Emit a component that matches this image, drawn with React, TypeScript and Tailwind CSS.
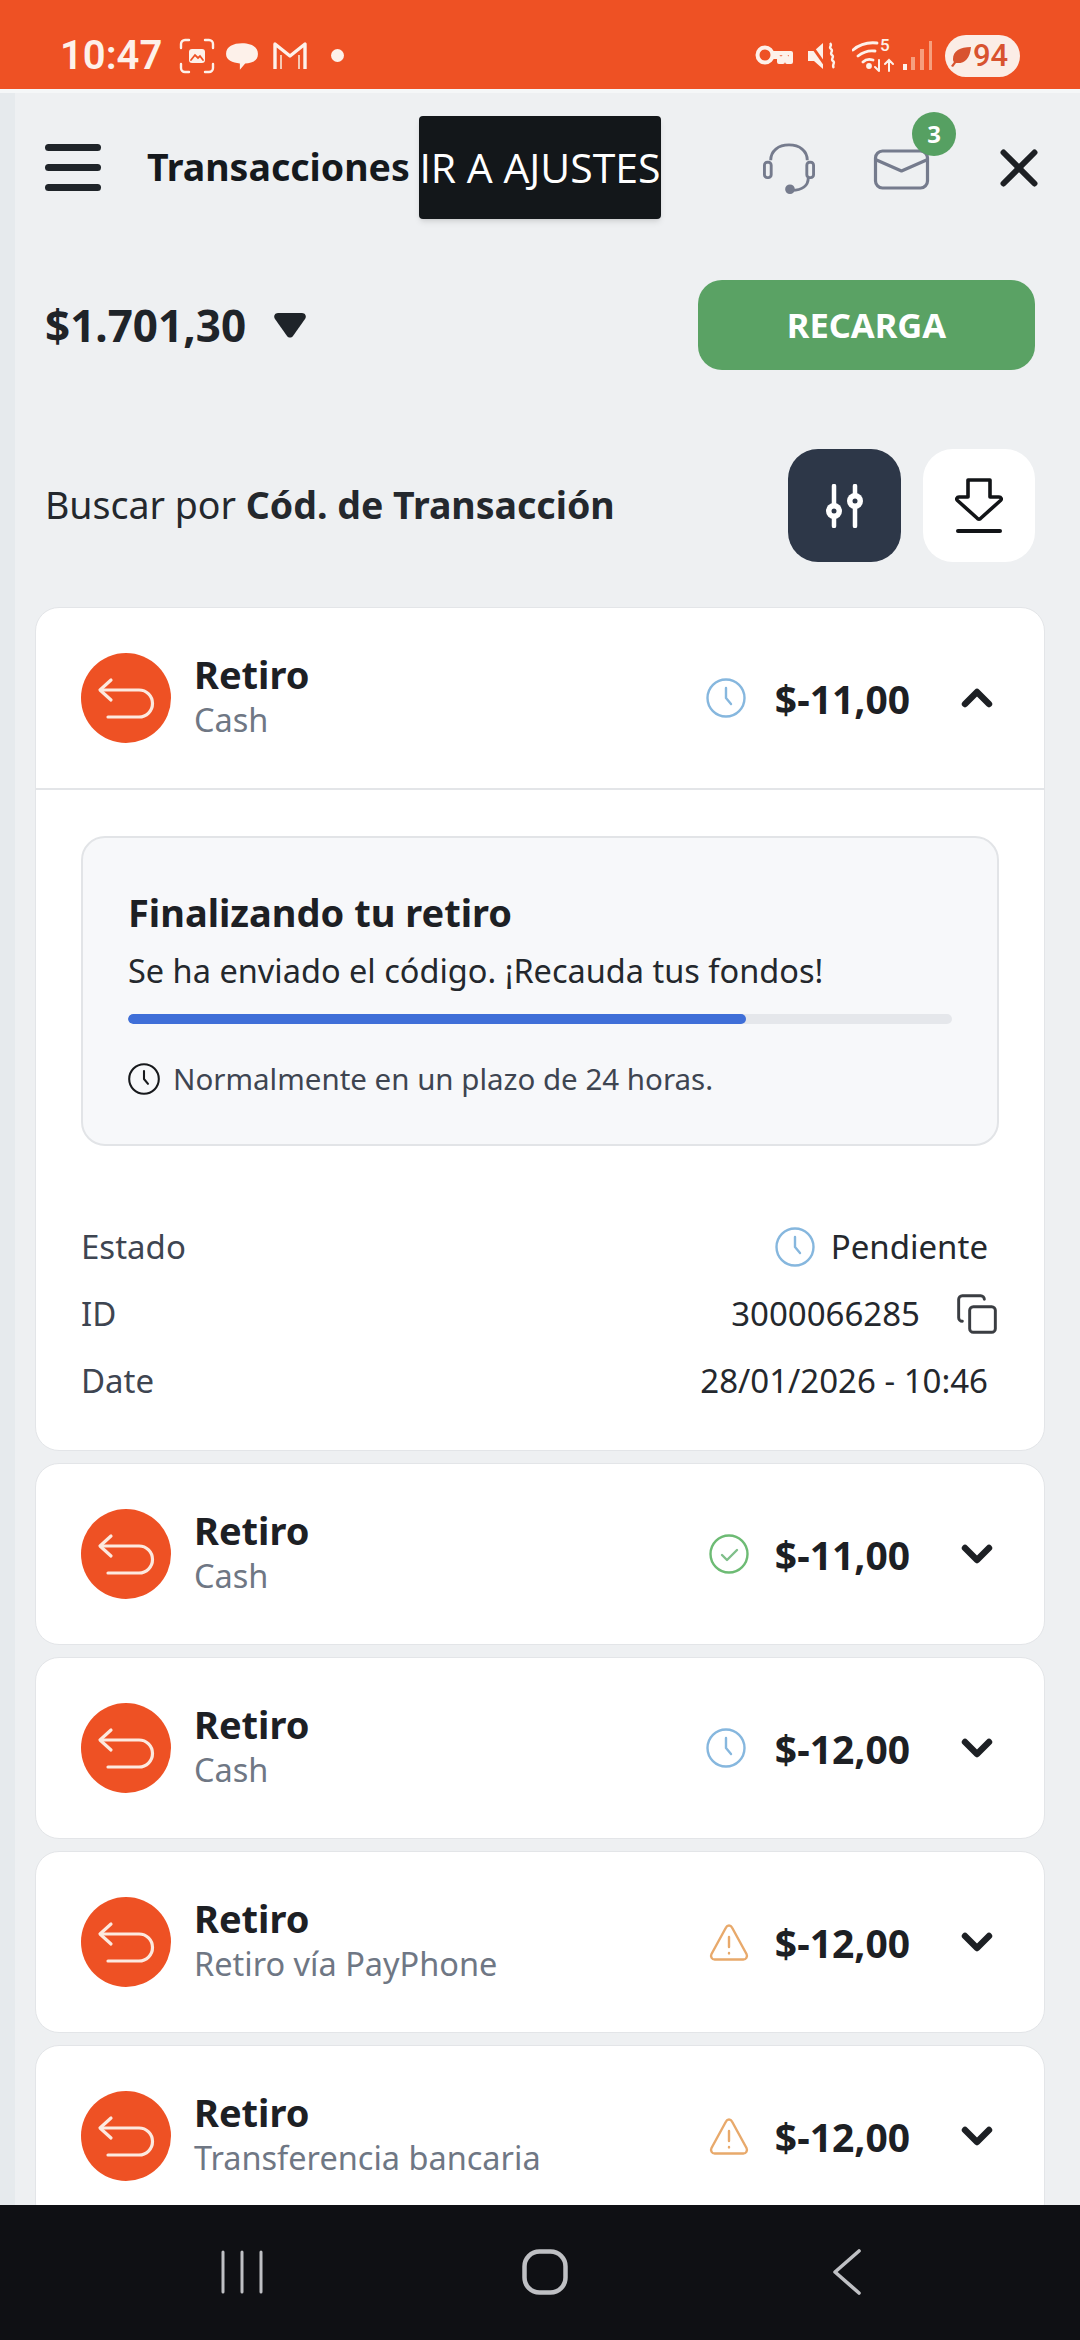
import { ChevronDown, ChevronUp, Copy, X } from 'lucide-react';

const sans = { fontFamily: '"Noto Sans", sans-serif' };

function ReturnIcon() {
  return (
    <div className="w-[90px] h-[90px] rounded-full bg-[#EE5124] shrink-0">
      <svg width="90" height="90" viewBox="0 0 90 90" fill="none" stroke="#FCE9DF" strokeWidth="3.2" strokeLinecap="round" strokeLinejoin="round">
        <path d="M30 27 19 37l11 10" />
        <path d="M20 37h38a13.500 13.500 0 0 1 0 27H27" />
      </svg>
    </div>
  );
}

function ClockIcon({ size = 40, color = '#86B7DE', width = 2.4 }: { size?: number; color?: string; width?: number }) {
  return (
    <svg width={size} height={size} viewBox="0 0 40 40" fill="none" stroke={color} strokeWidth={width} strokeLinecap="round" strokeLinejoin="round">
      <circle cx="20" cy="20" r="18.500" />
      <path d="M20 10v10l5 6" />
    </svg>
  );
}

function CheckIcon() {
  return (
    <svg width="40" height="40" viewBox="0 0 40 40" fill="none" strokeLinecap="round" strokeLinejoin="round">
      <circle cx="20" cy="20" r="18.500" stroke="#6DBB74" strokeWidth="2.400" />
      <path d="m13 21 5 5 10-10" stroke="#7FBF8A" strokeWidth="2.400" />
    </svg>
  );
}

function WarnIcon() {
  return (
    <svg width="40" height="38" viewBox="0 0 40 38" fill="none" stroke="#E8A96B" strokeWidth="2.400" strokeLinecap="round" strokeLinejoin="round">
      <path d="M17 4.500 2.500 31c-1.300 2.600.3 5.500 3.200 5.500h28.600c2.900 0 4.500-2.900 3.200-5.500L23 4.500c-1.400-2.700-4.600-2.700-6 0Z" />
      <path d="M20 14v10M20 30v.4" />
    </svg>
  );
}

type RowProps = { sub: string; amount: string; status: 'clock' | 'check' | 'warn'; open?: boolean };

function RowHead({ sub, amount, status, open }: RowProps) {
  return (
    <div className="flex items-center h-[180px] pl-[45px] pr-[50px]">
      <ReturnIcon />
      <div className="ml-[23px] flex-1 -mt-[2px]">
        <div className="text-[38px] leading-[45px] font-bold text-[#1D2024]">Retiro</div>
        <div className="text-[32.5px] leading-[45px] text-[#6F7784] whitespace-nowrap">{sub}</div>
      </div>
      <div className={status === 'clock' ? 'mr-[29px]' : 'mr-[26px]'}>
        {status === 'clock' && <ClockIcon />}
        {status === 'check' && <CheckIcon />}
        {status === 'warn' && <WarnIcon />}
      </div>
      <div className="text-[39px] font-bold leading-none text-[#1D2024] mr-[50px]">{amount}</div>
      {open ? (
        <ChevronUp size={48} strokeWidth={3.2} className="text-[#1D2024] -mx-[7px]" />
      ) : (
        <ChevronDown size={48} strokeWidth={3.2} className="text-[#1D2024] -mx-[7px]" />
      )}
    </div>
  );
}

function Row(props: RowProps) {
  return (
    <div className="bg-white rounded-[24px] border border-[#E3E5E8] mt-[12px] shrink-0">
      <RowHead {...props} />
    </div>
  );
}

function StatusBar() {
  return (
    <div className="h-[89px] bg-[#EE5124] flex items-center pl-[60px] pr-[60px] pt-[22px] shrink-0 text-[#FDF1EA]">
      <span className="text-[40px] font-semibold leading-none" style={{ fontFamily: 'Roboto, sans-serif' }}>10:47</span>
      <svg width="36" height="36" viewBox="0 0 36 36" className="ml-[17px]" fill="none" stroke="#FDF1EA" strokeWidth="2.400" strokeLinecap="round">
        <path d="M2 10V6a4 4 0 0 1 4-4h4M26 2h4a4 4 0 0 1 4 4v4M34 26v4a4 4 0 0 1-4 4h-4M10 34H6a4 4 0 0 1-4-4v-4" />
        <rect x="10" y="11" width="16" height="14" rx="3" fill="#FDF1EA" stroke="none" />
        <path d="m12 22 4-5 3 3 2-2 3 4" stroke="#EE5124" strokeWidth="1.800" />
      </svg>
      <svg width="34" height="34" viewBox="0 0 32 32" className="ml-[10px]" fill="#FDF1EA">
        <path d="M16 4c8 0 15 3 15 10s-7 9-12 9l-5 6 0-6C7 22 1 20 1 14 1 7 8 4 16 4Z" />
      </svg>
      <svg width="36" height="32" viewBox="0 0 36 32" className="ml-[13px]" fill="none" stroke="#FDF1EA" strokeWidth="3.400" strokeLinejoin="round">
        <path d="M3 29V4l15 12L33 4v25" />
        <path d="M9 29V15M27 29V15" strokeWidth="2" stroke="#F7C8B2" />
      </svg>
      <div className="w-[13px] h-[13px] rounded-full bg-[#FDF1EA] ml-[23px]" />
      <div className="flex-1" />
      <svg width="38" height="24" viewBox="0 0 38 24" fill="none" stroke="#FDF1EA" strokeWidth="4">
        <circle cx="10" cy="11" r="7.500" />
        <path d="M17 9h19v9h-4v-5h-4v5h-4v-5h-7" strokeLinejoin="round" />
      </svg>
      <svg width="30" height="32" viewBox="0 0 30 32" className="ml-[14px]" fill="#FDF1EA">
        <path d="M1 11h6l9-8v26l-9-8H1Z" />
        <path d="M2 2l19 27" stroke="#EE5124" strokeWidth="3" />
        <path d="M23 3c3 3-2 4 1 6s-2 4 1 6-2 4 1 6-2 4 1 7" fill="none" stroke="#FDF1EA" strokeWidth="2.400" />
      </svg>
      <svg width="42" height="34" viewBox="0 0 42 34" className="ml-[15px]" fill="none" stroke="#FDF1EA" strokeWidth="2.800" strokeLinecap="round">
        <path d="M1 11c7-6 15-8 24-7M6 17c5-4 10-6 17-5M11 23c3-3 7-3 10-2" />
        <circle cx="17" cy="27" r="1.500" fill="#FDF1EA" />
        <path d="M27 21v11m-4-4 4 4M37 32V21m-4 4 4-4 4 4" strokeWidth="2" />
      </svg>
      <span className="text-[17px] font-medium -ml-[14px] -mt-[20px] leading-none w-[14px]" style={{ fontFamily: 'Roboto, sans-serif' }}>5</span>
      <svg width="30" height="32" viewBox="0 0 30 32" className="ml-[9px]" fill="#F69F7E">
        <rect x="0" y="24" width="4" height="6" fill="#FDF1EA" />
        <rect x="8" y="17" width="4" height="13" />
        <rect x="17" y="9" width="4" height="21" />
        <rect x="26" y="1" width="3" height="29" />
      </svg>
      <div className="ml-[12px] w-[75px] h-[42px] rounded-full bg-[#FBEDE6] flex items-center pl-[5px] gap-[1px]">
        <svg width="22" height="24" viewBox="0 0 22 24" fill="#D8532F" className="shrink-0">
          <path d="M21 3C10 3 3 7 3 15c0 1 0 2 1 3L1 22l2 1 3-4c8 1 14-4 15-16Z" />
        </svg>
        <span className="text-[31px] font-medium leading-none text-[#D8532F]" style={{ fontFamily: 'Roboto, sans-serif' }}>94</span>
      </div>
    </div>
  );
}

function Header() {
  return (
    <div className="flex items-center h-[149px] pl-[30px] shrink-0">
      <div className="w-[56px] flex flex-col gap-[13px] shrink-0">
        <div className="h-[7px] rounded-full bg-[#1F2429]" />
        <div className="h-[7px] rounded-full bg-[#1F2429]" />
        <div className="h-[7px] rounded-full bg-[#1F2429]" />
      </div>
      <div className="ml-[46px] w-[272px] text-[37.5px] font-bold text-[#15191D] whitespace-nowrap">Transacciones</div>
      <div className="w-[242px] h-[103px] bg-[#13171A] rounded-[4px] shadow-md text-[41px] text-white flex items-center justify-center whitespace-nowrap shrink-0" style={{ fontFamily: '"Open Sans", sans-serif' }}>
        IR A AJUSTES
      </div>
      <svg width="54" height="52" viewBox="0 0 56 54" className="ml-[101px] mt-[3px] shrink-0" fill="none" stroke="#757B8D" strokeWidth="3">
        <path d="M9 18C9 8 17 2 28 2s19 6 19 16" />
        <rect x="2.500" y="20" width="7" height="16" rx="3" />
        <rect x="46.500" y="20" width="7" height="16" rx="3" />
        <path d="M48 36c0 8-6 13-17 13" />
        <circle cx="29" cy="48" r="3.500" fill="#757B8D" />
      </svg>
      <div className="relative ml-[57px] mt-[3px] shrink-0">
        <svg width="57" height="41" viewBox="0 0 56 41" className="block" fill="none" stroke="#757B8D" strokeWidth="3.200" strokeLinejoin="round">
          <rect x="2" y="2" width="52" height="37" rx="7" />
          <path d="m3 11 25 11 25-11" strokeLinecap="round" />
        </svg>
        <div className="absolute -top-[37px] left-[39px] w-[44px] h-[44px] rounded-full bg-[#56A062] text-white text-[24px] font-bold flex items-center justify-center">3</div>
      </div>
      <X size={62} strokeWidth={2.300} className="text-[#1D2024] ml-[58px] mt-[1px] shrink-0" />
    </div>
  );
}

function DetailPanel() {
  return (
    <div className="border-t-2 border-[#E3E5E8] px-[45px] pt-[46px] pb-[47px]">
      <div className="h-[310px] bg-[#F7F8FA] border-2 border-[#E2E4E7] rounded-[24px] px-[45px] pt-[49px]">
        <div className="text-[38px] leading-[50px] font-bold text-[#1D2024] whitespace-nowrap">Finalizando tu retiro</div>
        <div className="text-[32.5px] leading-[44px] mt-[12px] text-[#24282D] whitespace-nowrap">Se ha enviado el código. ¡Recauda tus fondos!</div>
        <div className="h-[10px] rounded-full bg-[#E5E7EB] mt-[21px] overflow-hidden">
          <div className="h-full w-[75%] rounded-full bg-[#3F6FD8]" />
        </div>
        <div className="flex items-center mt-[37px] gap-[13px]">
          <ClockIcon size={32} color="#17191C" width={2.600} />
          <span className="text-[29.5px] leading-[36px] text-[#3E4551] whitespace-nowrap">Normalmente en un plazo de 24 horas.</span>
        </div>
      </div>
      <div className="mt-[79px] flex flex-col gap-[23px] text-[33px] leading-[44px] text-[#24282D]">
        <div className="flex items-center justify-between pr-[11px]">
          <span className="text-[#3E4551]">Estado</span>
          <span className="flex items-center gap-[16px]"><ClockIcon />Pendiente</span>
        </div>
        <div className="flex items-center justify-between">
          <span className="text-[#3E4551]">ID</span>
          <span className="flex items-center gap-[35px]">3000066285<Copy size={44} strokeWidth={1.600} className="text-[#3A3D42]" /></span>
        </div>
        <div className="flex items-center justify-between pr-[11px]">
          <span className="text-[#3E4551]">Date</span>
          <span>28/01/2026 - 10:46</span>
        </div>
      </div>
    </div>
  );
}

export default function App() {
  return (
    <div className="w-[1080px] h-[2340px] flex flex-col bg-[#EEF0F2] overflow-hidden" style={sans}>
      <StatusBar />
      <div className="flex flex-1 min-h-0 border-t-[4px] border-[#F5F7F8]">
        <div className="w-[15px] bg-[#E6EAED] shrink-0" />
        <div className="flex-1 min-w-0 flex flex-col overflow-hidden">
          <Header />
          <div className="flex items-center justify-between pl-[30px] pr-[45px] mt-[38px] h-[90px] shrink-0">
            <div className="flex items-center">
              <span className="text-[44px] font-bold text-[#1F2429] leading-none">$1.701,30</span>
              <svg width="34" height="27" viewBox="0 0 34 27" className="ml-[27px]" fill="#1F2429">
                <path d="M5 1h24c3 0 5 3 3 6L20 24c-1.500 2-4.500 2-6 0L2 7C0 4 2 1 5 1Z" />
              </svg>
            </div>
            <div className="w-[337px] h-[90px] rounded-[24px] bg-[#5AA264] text-white text-[34.5px] font-bold flex items-center justify-center">RECARGA</div>
          </div>
          <div className="flex items-center pl-[30px] pr-[45px] mt-[79px] h-[113px] shrink-0">
            <div className="flex-1 text-[37.5px] text-[#24282D] whitespace-nowrap">Buscar por <b className="font-bold">Cód. de Transacción</b></div>
            <div className="w-[113px] h-[113px] rounded-[30px] bg-[#2D3748] flex items-center justify-center">
              <svg width="42" height="44" viewBox="0 0 42 44" fill="none" stroke="#fff" strokeWidth="4.500" strokeLinecap="round">
                <path d="M10 2v40M31 2v40" />
                <circle cx="10" cy="27" r="8" fill="#fff" stroke="none" />
                <circle cx="31" cy="17" r="8" fill="#fff" stroke="none" />
                <circle cx="10" cy="27" r="2.500" fill="#2D3748" stroke="none" />
                <circle cx="31" cy="17" r="2.500" fill="#2D3748" stroke="none" />
              </svg>
            </div>
            <div className="w-[112px] h-[113px] rounded-[30px] bg-white flex items-center justify-center ml-[22px]">
              <svg width="48" height="56" viewBox="0 0 48 56" fill="none" stroke="#121417" strokeWidth="3.600" strokeLinejoin="round" strokeLinecap="round">
                <path d="M13 2h22v17h9c2 0 3 2 1.500 3.500L26 40c-1 1.500-3 1.500-4 0L2.500 22.500C1 21 2 19 4 19h9Z" />
                <path d="M3 53h42" strokeWidth="4" />
              </svg>
            </div>
          </div>
          <div className="pl-[20px] pr-[35px] mt-[45px] flex flex-col shrink-0">
            <div className="bg-white rounded-[24px] border border-[#E3E5E8] shrink-0">
              <RowHead sub="Cash" amount="$-11,00" status="clock" open />
              <DetailPanel />
            </div>
            <Row sub="Cash" amount="$-11,00" status="check" />
            <Row sub="Cash" amount="$-12,00" status="clock" />
            <Row sub="Retiro vía PayPhone" amount="$-12,00" status="warn" />
            <Row sub="Transferencia bancaria" amount="$-12,00" status="warn" />
          </div>
        </div>
      </div>
      <div className="h-[135px] bg-[#0F1014] shrink-0 flex items-center pl-[220px] relative z-10">
        <div className="flex items-center -mt-[2px]">
          <svg width="44" height="44" viewBox="0 0 44 44" fill="none" stroke="#BFC0C4" strokeWidth="3" strokeLinecap="round"><path d="M3 2v40M22 2v40M41 2v40" /></svg>
          <svg width="46" height="46" viewBox="0 0 46 46" fill="none" stroke="#BFC0C4" strokeWidth="4.500" className="ml-[258px]"><rect x="2.500" y="2.500" width="41" height="41" rx="15" /></svg>
          <svg width="30" height="46" viewBox="0 0 30 46" fill="none" stroke="#BFC0C4" strokeWidth="3.600" strokeLinecap="round" strokeLinejoin="round" className="ml-[264px]"><path d="M27 2 3 23l24 21" /></svg>
        </div>
      </div>
    </div>
  );
}
